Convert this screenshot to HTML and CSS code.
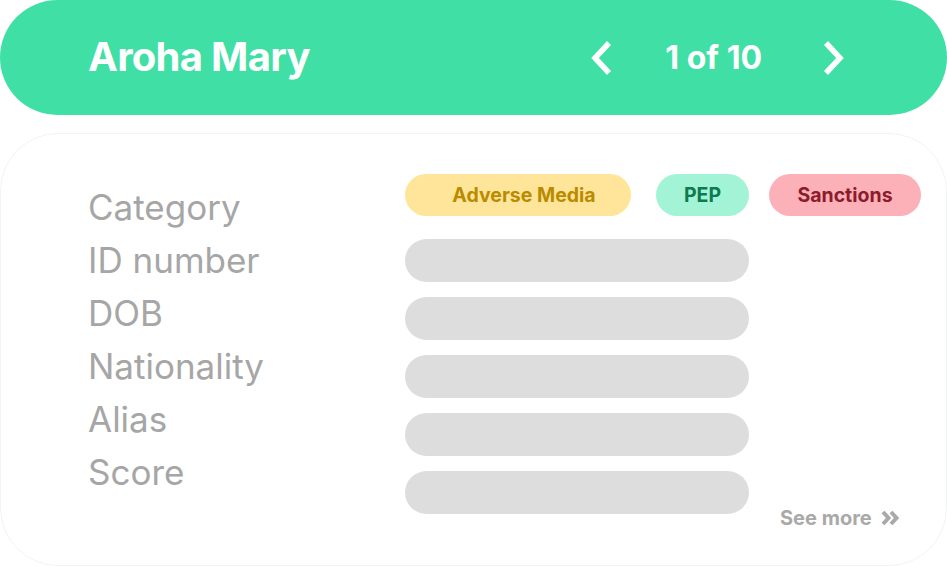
FILE: index.html
```html
<!DOCTYPE html>
<html lang="en">
<head>
    <meta charset="UTF-8">
    <meta name="viewport" content="width=device-width, initial-scale=1.0">
    <title>Screening result</title>
    <link rel="stylesheet" href="styles.css">
</head>
<body>
    <div class="header">
        <div class="name">Aroha Mary</div>
        <div class="pager">
            <svg class="arrow" viewBox="0 0 24 36" width="24" height="36">
                <polyline points="20,3 6,18 20,33" fill="none" stroke="#fff" stroke-width="5.5" stroke-linejoin="miter"/>
            </svg>
            <span class="count">1 of 10</span>
            <svg class="arrow" viewBox="0 0 24 36" width="24" height="36">
                <polyline points="4,3 18,18 4,33" fill="none" stroke="#fff" stroke-width="5.5" stroke-linejoin="miter"/>
            </svg>
        </div>
    </div>

    <div class="card">
        <!-- Etiquetas -->
        <div class="labels">
            <div class="label">Category</div>
            <div class="label">ID number</div>
            <div class="label">DOB</div>
            <div class="label">Nationality</div>
            <div class="label">Alias</div>
            <div class="label">Score</div>
        </div>

        <!-- Valores -->
        <div class="values">
            <div class="tags">
                <span class="tag adverse">Adverse Media</span>
                <span class="tag pep">PEP</span>
                <span class="tag sanctions">Sanctions</span>
            </div>
            <div class="rows">
                <div class="bars">
                    <div class="bar"></div>
                    <div class="bar"></div>
                    <div class="bar"></div>
                    <div class="bar"></div>
                    <div class="bar"></div>
                </div>
                <div class="see-more">
                    See more
                    <svg viewBox="0 0 18 16" width="18" height="16">
                        <polyline points="2,2 7.5,8 2,14" fill="none" stroke="#a9a9a9" stroke-width="4"/>
                        <polyline points="10,2 15.5,8 10,14" fill="none" stroke="#a9a9a9" stroke-width="4"/>
                    </svg>
                </div>
            </div>
        </div>
    </div>
</body>
</html>
```

FILE: styles.css
```css
body {
    margin: 0;
    font-family: Inter, "Noto Sans", sans-serif;
    background: white;
    overflow: hidden;
}
.header {
    height: 115px;
    background: #40dfa5;
    border-radius: 58px;
    display: flex;
    align-items: center;
    justify-content: space-between;
    padding: 0 101px 0 88px;
    color: white;
}
.name {
    font-size: 40px;
    font-weight: 700;
    letter-spacing: -0.7px;
    margin-top: -2px;
}
.pager {
    display: flex;
    align-items: center;
    gap: 52px;
}
.pager .arrow {
    display: block;
}
.count {
    font-size: 32px;
    font-weight: 700;
    margin: -1px 8px 0 0;
}
.card {
    margin-top: 18px;
    height: 433px;
    box-sizing: border-box;
    border: 1px solid #f2f4f3;
    border-radius: 58px;
    display: flex;
}
.labels {
    width: 317px;
    padding: 47px 0 0 87px;
}
.label {
    font-size: 35px;
    line-height: 53px;
    color: #a6a6a6;
}
.values {
    padding-top: 40px;
}
.tags {
    display: flex;
    height: 42px;
}
.tag {
    height: 42px;
    border-radius: 21px;
    display: flex;
    align-items: center;
    justify-content: center;
    font-size: 19.5px;
    font-weight: 700;
}
.tag.adverse {
    width: 226px;
    padding-left: 12px;
    box-sizing: border-box;
    background: #ffe59a;
    color: #b98b00;
}
.tag.pep {
    width: 93px;
    margin-left: 25px;
    background: #a3f3d7;
    color: #0c7b4f;
}
.tag.sanctions {
    width: 152px;
    margin-left: 20px;
    background: #fcb0b7;
    color: #8c1b2c;
}
.rows {
    display: flex;
    margin-top: 23px;
}
.bars {
    display: flex;
    flex-direction: column;
    gap: 15px;
    width: 344px;
}
.bar {
    height: 43px;
    border-radius: 22px;
    background: #dddddd;
}
.see-more {
    align-self: flex-end;
    margin: 0 0 -16px 31px;
    display: flex;
    align-items: center;
    gap: 9px;
    font-size: 20px;
    font-weight: 700;
    color: #a9a9a9;
}
.see-more svg {
    display: block;
}
```
